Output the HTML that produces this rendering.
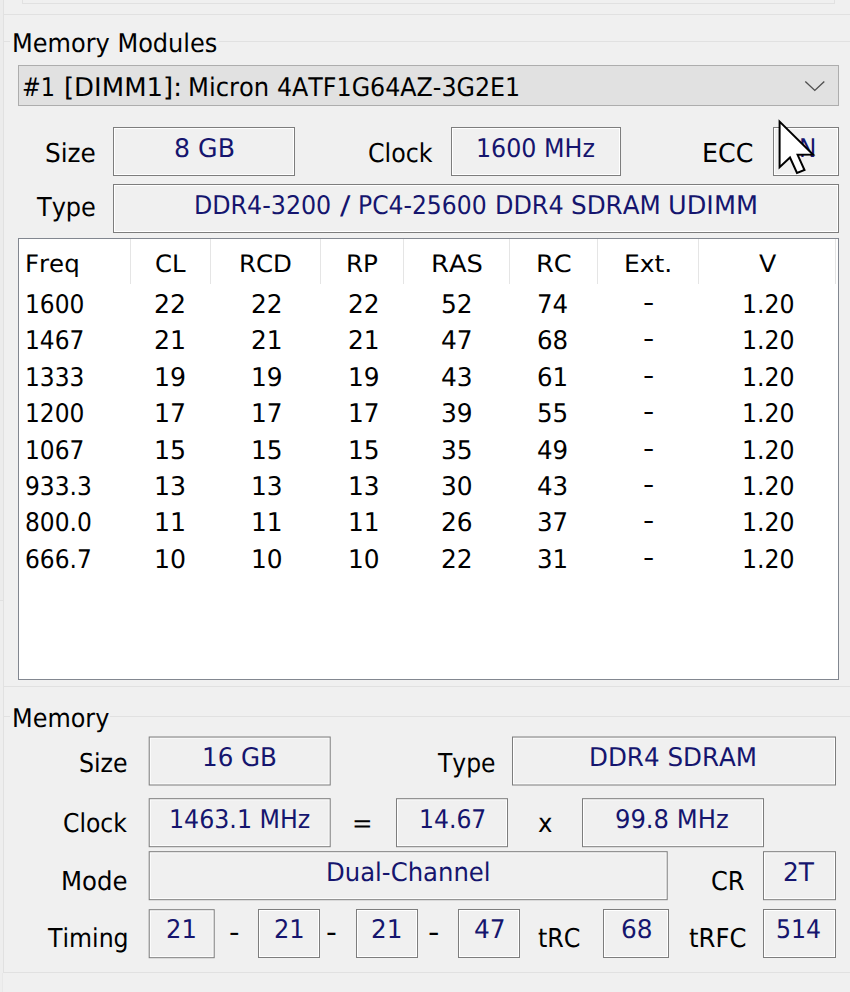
<!DOCTYPE html>
<html lang="en">
<head>
<meta charset="utf-8">
<title>Memory</title>
<style>
html,body{margin:0;padding:0}
body{width:850px;height:992px;overflow:hidden;background:#f0f0f0;position:relative;font-family:"DejaVu Sans Condensed", "DejaVu Sans", "Liberation Sans", sans-serif;font-size:25.2px;color:#000}
.t{position:absolute;white-space:nowrap;line-height:1;transform-origin:0 0;font-kerning:none;font-variant-ligatures:none;text-rendering:geometricPrecision}
.k{color:#000}
.n{color:#15156e}
.f{position:absolute;box-sizing:border-box;border:1px solid #7d7d7d;background:#f0f0f0;box-shadow:inset 0 0 0 1px #fff}
.ln{position:absolute;background:#e1e1e1}
.combo{position:absolute;box-sizing:border-box;left:18px;top:65px;width:821px;height:41px;background:#e1e1e1;border:1px solid #adadad}
.list{position:absolute;box-sizing:border-box;left:18px;top:238px;width:821px;height:442px;background:#fff;border:1px solid #828790}
.hd{position:absolute;top:239px;width:1px;height:45px;background:#e5e5e5}

</style>
</head>
<body>
<div class="ln" style="left:22px;top:0;width:1px;height:3px"></div>
<div class="ln" style="left:22px;top:3px;width:813px;height:1px"></div>
<div class="ln" style="left:834px;top:0;width:1px;height:3px"></div>
<div style="position:absolute;left:0;top:0;width:3px;height:600px;background:#ececec"></div>
<div style="position:absolute;left:0;top:601px;width:3px;height:391px;background:#eeeeee"></div>
<div class="ln" style="left:0;top:600px;width:3px;height:1px"></div>
<div class="ln" style="left:3px;top:0;width:1px;height:973px"></div>
<div style="position:absolute;left:2px;top:973px;width:1px;height:19px;background:#e8e8e8"></div>
<div class="ln" style="left:3px;top:14px;width:847px;height:1px"></div>
<div class="ln" style="left:3px;top:41px;width:1px;height:646px"></div>
<div class="ln" style="left:3px;top:41px;width:7px;height:1px"></div>
<div class="ln" style="left:219px;top:41px;width:631px;height:1px"></div>
<div class="ln" style="left:3px;top:686px;width:847px;height:1px"></div>
<div class="ln" style="left:3px;top:716px;width:1px;height:257px"></div>
<div class="ln" style="left:3px;top:716px;width:7px;height:1px"></div>
<div class="ln" style="left:110px;top:716px;width:740px;height:1px"></div>
<div class="ln" style="left:3px;top:972px;width:847px;height:1px"></div>
<div class="combo"></div>
<svg style="position:absolute;left:803px;top:77px" width="26" height="18" viewBox="0 0 26 18"><path d="M2.3 4.5 L11.8 13.4 L21.3 4.5" fill="none" stroke="#505050" stroke-width="1.4"/></svg>
<div class="list"></div>
<div class="hd" style="left:130px"></div>
<div class="hd" style="left:210px"></div>
<div class="hd" style="left:320px"></div>
<div class="hd" style="left:403px"></div>
<div class="hd" style="left:509px"></div>
<div class="hd" style="left:597px"></div>
<div class="hd" style="left:698px"></div>
<div class="hd" style="left:835px"></div>
<div class="f" style="left:113px;top:127px;width:182px;height:49px"></div>
<div class="f" style="left:451px;top:127px;width:170px;height:49px"></div>
<div class="f" style="left:773px;top:127px;width:66px;height:49px"></div>
<div class="f" style="left:113px;top:184px;width:726px;height:49px"></div>
<div class="f" style="left:148px;top:736px;width:182px;height:49px;transform:translate(0.7px,0.5px)"></div>
<div class="f" style="left:512px;top:736px;width:324px;height:49px;transform:translate(0px,0.5px)"></div>
<div class="f" style="left:148px;top:798px;width:182px;height:49px;transform:translate(0.7px,0.2px)"></div>
<div class="f" style="left:396px;top:798px;width:112px;height:49px;transform:translate(0px,0.2px)"></div>
<div class="f" style="left:582px;top:798px;width:182px;height:49px;transform:translate(0px,0.2px)"></div>
<div class="f" style="left:148px;top:851px;width:519px;height:49px;transform:translate(0.7px,0.2px)"></div>
<div class="f" style="left:763px;top:851px;width:73px;height:49px;transform:translate(0px,0.2px)"></div>
<div class="f" style="left:148px;top:909px;width:66px;height:49px;transform:translate(0.7px,0.2px)"></div>
<div class="f" style="left:258px;top:909px;width:62px;height:49px"></div>
<div class="f" style="left:356px;top:909px;width:62px;height:49px"></div>
<div class="f" style="left:458px;top:909px;width:62px;height:49px"></div>
<div class="f" style="left:603px;top:909px;width:66px;height:49px"></div>
<div class="f" style="left:763px;top:909px;width:73px;height:49px"></div>
<span id="gm" class="t k" style="left:11.86px;top:32px;font-size:25.7px;transform:scaleX(1.0401)">Memory Modules</span>
<span id="cb0" class="t k" style="left:22.48px;top:76px;font-size:25.7px;transform:scaleX(0.9684)">#1 </span>
<span id="cb1" class="t k" style="left:64.34px;top:76px;font-size:25.7px;transform:scaleX(1.1224)">[DIMM1]: </span>
<span id="cb2" class="t k" style="left:188.27px;top:76px;font-size:25.7px;transform:scaleX(1.0491)">Micron </span>
<span id="cb3" class="t k" style="left:276.82px;top:76px;font-size:25.7px;transform:scaleX(1.0281)">4ATF1G64AZ-3G2E1</span>
<span id="lsize" class="t k" style="left:45.38px;top:141px;font-size:26px;transform:scaleX(1.0591)">Size</span>
<span id="vsize" class="t n" style="left:173.60px;top:137px;font-size:25.7px;transform:scaleX(1.0921)">8 GB</span>
<span id="lclock" class="t k" style="left:368.04px;top:141px;font-size:26px;transform:scaleX(1.0166)">Clock</span>
<span id="vclock" class="t n" style="left:476.16px;top:137px;font-size:25.7px;transform:scaleX(1.0288)">1600 MHz</span>
<span id="lecc" class="t k" style="left:702.29px;top:141px;font-size:26px;transform:scaleX(1.0821)">ECC</span>
<span id="vecc" class="t n" style="left:798.50px;top:137px;font-size:25.7px;transform:scaleX(1.0005)">N</span>
<span id="ltype" class="t k" style="left:37.40px;top:195px;font-size:26px;transform:scaleX(1.0261)">Type</span>
<span id="vt0" class="t n" style="left:193.77px;top:194px;font-size:25.7px;transform:scaleX(1.0279)">DDR4-3200 </span>
<span id="vt1" class="t n" style="left:340.00px;top:194px;font-size:25.7px;transform:scaleX(1.3384)">/ </span>
<span id="vt2" class="t n" style="left:358.32px;top:194px;font-size:25.7px;transform:scaleX(1.0154)">PC4-25600 </span>
<span id="vt3" class="t n" style="left:495.07px;top:194px;font-size:25.7px;transform:scaleX(1.0351)">DDR4 </span>
<span id="vt4" class="t n" style="left:571.13px;top:194px;font-size:25.7px;transform:scaleX(1.0661)">SDRAM </span>
<span id="vt5" class="t n" style="left:667.50px;top:194px;font-size:25.7px;transform:scaleX(1.1047)">UDIMM</span>
<span id="h0" class="t k" style="left:25.00px;top:252px;font-size:24px;transform:scaleX(1.1322)">Freq</span>
<span id="h1" class="t k" style="left:154.89px;top:252px;font-size:24px;transform:scaleX(1.1272)">CL</span>
<span id="h2" class="t k" style="left:238.74px;top:252px;font-size:24px;transform:scaleX(1.1334)">RCD</span>
<span id="h3" class="t k" style="left:345.89px;top:252px;font-size:24px;transform:scaleX(1.1411)">RP</span>
<span id="h4" class="t k" style="left:430.99px;top:252px;font-size:24px;transform:scaleX(1.1921)">RAS</span>
<span id="h5" class="t k" style="left:535.99px;top:252px;font-size:24px;transform:scaleX(1.1864)">RC</span>
<span id="h6" class="t k" style="left:623.76px;top:252px;font-size:24px;transform:scaleX(1.1549)">Ext.</span>
<span id="h7" class="t k" style="left:759.28px;top:252px;font-size:24px;transform:scaleX(1.1679)">V</span>
<span id="r0c0" class="t k" style="left:24.99px;top:293px;font-size:25.7px;transform:scaleX(1.0101)">1600</span>
<span id="r0c1" class="t k" style="left:154.32px;top:293px;font-size:25.7px;transform:scaleX(1.0907)">22</span>
<span id="r0c2" class="t k" style="left:250.58px;top:293px;font-size:25.7px;transform:scaleX(1.0744)">22</span>
<span id="r0c3" class="t k" style="left:347.79px;top:293px;font-size:25.7px;transform:scaleX(1.0745)">22</span>
<span id="r0c4" class="t k" style="left:441.05px;top:293px;font-size:25.7px;transform:scaleX(1.0761)">52</span>
<span id="r0c5" class="t k" style="left:537.12px;top:293px;font-size:25.7px;transform:scaleX(1.0602)">74</span>
<span id="r0c6" class="t k" style="left:643.19px;top:291px;font-size:25.7px;transform:scaleX(1.35)">-</span>
<span id="r0c7" class="t k" style="left:742.43px;top:293px;font-size:25.7px;transform:scaleX(1.0225)">1.20</span>
<span id="r1c0" class="t k" style="left:24.99px;top:329px;font-size:25.7px;transform:scaleX(1.0101)">1467</span>
<span id="r1c1" class="t k" style="left:154.32px;top:329px;font-size:25.7px;transform:scaleX(1.0907)">21</span>
<span id="r1c2" class="t k" style="left:250.58px;top:329px;font-size:25.7px;transform:scaleX(1.0744)">21</span>
<span id="r1c3" class="t k" style="left:347.79px;top:329px;font-size:25.7px;transform:scaleX(1.0745)">21</span>
<span id="r1c4" class="t k" style="left:441.05px;top:329px;font-size:25.7px;transform:scaleX(1.0761)">47</span>
<span id="r1c5" class="t k" style="left:537.12px;top:329px;font-size:25.7px;transform:scaleX(1.0602)">68</span>
<span id="r1c6" class="t k" style="left:643.19px;top:327px;font-size:25.7px;transform:scaleX(1.35)">-</span>
<span id="r1c7" class="t k" style="left:742.43px;top:329px;font-size:25.7px;transform:scaleX(1.0225)">1.20</span>
<span id="r2c0" class="t k" style="left:24.99px;top:366px;font-size:25.7px;transform:scaleX(1.0101)">1333</span>
<span id="r2c1" class="t k" style="left:154.32px;top:366px;font-size:25.7px;transform:scaleX(1.0907)">19</span>
<span id="r2c2" class="t k" style="left:250.58px;top:366px;font-size:25.7px;transform:scaleX(1.0744)">19</span>
<span id="r2c3" class="t k" style="left:347.79px;top:366px;font-size:25.7px;transform:scaleX(1.0745)">19</span>
<span id="r2c4" class="t k" style="left:441.05px;top:366px;font-size:25.7px;transform:scaleX(1.0761)">43</span>
<span id="r2c5" class="t k" style="left:537.12px;top:366px;font-size:25.7px;transform:scaleX(1.0602)">61</span>
<span id="r2c6" class="t k" style="left:643.19px;top:364px;font-size:25.7px;transform:scaleX(1.35)">-</span>
<span id="r2c7" class="t k" style="left:742.43px;top:366px;font-size:25.7px;transform:scaleX(1.0225)">1.20</span>
<span id="r3c0" class="t k" style="left:24.99px;top:402px;font-size:25.7px;transform:scaleX(1.0101)">1200</span>
<span id="r3c1" class="t k" style="left:154.32px;top:402px;font-size:25.7px;transform:scaleX(1.0907)">17</span>
<span id="r3c2" class="t k" style="left:250.58px;top:402px;font-size:25.7px;transform:scaleX(1.0744)">17</span>
<span id="r3c3" class="t k" style="left:347.79px;top:402px;font-size:25.7px;transform:scaleX(1.0745)">17</span>
<span id="r3c4" class="t k" style="left:441.05px;top:402px;font-size:25.7px;transform:scaleX(1.0761)">39</span>
<span id="r3c5" class="t k" style="left:537.12px;top:402px;font-size:25.7px;transform:scaleX(1.0602)">55</span>
<span id="r3c6" class="t k" style="left:643.19px;top:400px;font-size:25.7px;transform:scaleX(1.35)">-</span>
<span id="r3c7" class="t k" style="left:742.43px;top:402px;font-size:25.7px;transform:scaleX(1.0225)">1.20</span>
<span id="r4c0" class="t k" style="left:24.99px;top:439px;font-size:25.7px;transform:scaleX(1.0101)">1067</span>
<span id="r4c1" class="t k" style="left:154.32px;top:439px;font-size:25.7px;transform:scaleX(1.0907)">15</span>
<span id="r4c2" class="t k" style="left:250.58px;top:439px;font-size:25.7px;transform:scaleX(1.0744)">15</span>
<span id="r4c3" class="t k" style="left:347.79px;top:439px;font-size:25.7px;transform:scaleX(1.0745)">15</span>
<span id="r4c4" class="t k" style="left:441.05px;top:439px;font-size:25.7px;transform:scaleX(1.0761)">35</span>
<span id="r4c5" class="t k" style="left:537.12px;top:439px;font-size:25.7px;transform:scaleX(1.0602)">49</span>
<span id="r4c6" class="t k" style="left:643.19px;top:437px;font-size:25.7px;transform:scaleX(1.35)">-</span>
<span id="r4c7" class="t k" style="left:742.43px;top:439px;font-size:25.7px;transform:scaleX(1.0225)">1.20</span>
<span id="r5c0" class="t k" style="left:24.99px;top:475px;font-size:25.7px;transform:scaleX(1.0101)">933.3</span>
<span id="r5c1" class="t k" style="left:154.32px;top:475px;font-size:25.7px;transform:scaleX(1.0907)">13</span>
<span id="r5c2" class="t k" style="left:250.58px;top:475px;font-size:25.7px;transform:scaleX(1.0744)">13</span>
<span id="r5c3" class="t k" style="left:347.79px;top:475px;font-size:25.7px;transform:scaleX(1.0745)">13</span>
<span id="r5c4" class="t k" style="left:441.05px;top:475px;font-size:25.7px;transform:scaleX(1.0761)">30</span>
<span id="r5c5" class="t k" style="left:537.12px;top:475px;font-size:25.7px;transform:scaleX(1.0602)">43</span>
<span id="r5c6" class="t k" style="left:643.19px;top:473px;font-size:25.7px;transform:scaleX(1.35)">-</span>
<span id="r5c7" class="t k" style="left:742.43px;top:475px;font-size:25.7px;transform:scaleX(1.0225)">1.20</span>
<span id="r6c0" class="t k" style="left:24.99px;top:511px;font-size:25.7px;transform:scaleX(1.0101)">800.0</span>
<span id="r6c1" class="t k" style="left:154.32px;top:511px;font-size:25.7px;transform:scaleX(1.0907)">11</span>
<span id="r6c2" class="t k" style="left:250.58px;top:511px;font-size:25.7px;transform:scaleX(1.0744)">11</span>
<span id="r6c3" class="t k" style="left:347.79px;top:511px;font-size:25.7px;transform:scaleX(1.0745)">11</span>
<span id="r6c4" class="t k" style="left:441.05px;top:511px;font-size:25.7px;transform:scaleX(1.0761)">26</span>
<span id="r6c5" class="t k" style="left:537.12px;top:511px;font-size:25.7px;transform:scaleX(1.0602)">37</span>
<span id="r6c6" class="t k" style="left:643.19px;top:509px;font-size:25.7px;transform:scaleX(1.35)">-</span>
<span id="r6c7" class="t k" style="left:742.43px;top:511px;font-size:25.7px;transform:scaleX(1.0225)">1.20</span>
<span id="r7c0" class="t k" style="left:24.99px;top:548px;font-size:25.7px;transform:scaleX(1.0101)">666.7</span>
<span id="r7c1" class="t k" style="left:154.32px;top:548px;font-size:25.7px;transform:scaleX(1.0907)">10</span>
<span id="r7c2" class="t k" style="left:250.58px;top:548px;font-size:25.7px;transform:scaleX(1.0744)">10</span>
<span id="r7c3" class="t k" style="left:347.79px;top:548px;font-size:25.7px;transform:scaleX(1.0745)">10</span>
<span id="r7c4" class="t k" style="left:441.05px;top:548px;font-size:25.7px;transform:scaleX(1.0761)">22</span>
<span id="r7c5" class="t k" style="left:537.12px;top:548px;font-size:25.7px;transform:scaleX(1.0602)">31</span>
<span id="r7c6" class="t k" style="left:643.19px;top:546px;font-size:25.7px;transform:scaleX(1.35)">-</span>
<span id="r7c7" class="t k" style="left:742.43px;top:548px;font-size:25.7px;transform:scaleX(1.0225)">1.20</span>
<span id="gmem" class="t k" style="left:11.85px;top:707px;font-size:25.7px;transform:scaleX(1.0356)">Memory</span>
<span id="msize" class="t k" style="left:79.09px;top:751px;font-size:26px;transform:scaleX(1.0119)">Size</span>
<span id="mvsize" class="t n" style="left:202.34px;top:746px;font-size:25.7px;transform:scaleX(1.063)">16 GB</span>
<span id="mtype" class="t k" style="left:438.16px;top:751px;font-size:26px;transform:scaleX(1.0015)">Type</span>
<span id="mvtype" class="t n" style="left:589.45px;top:746px;font-size:25.7px;transform:scaleX(1.0638)">DDR4 SDRAM</span>
<span id="mclock" class="t k" style="left:63.30px;top:811px;font-size:26px;transform:scaleX(1.0059)">Clock</span>
<span id="mvclock" class="t n" style="left:168.69px;top:808px;font-size:25.7px;transform:scaleX(1.0267)">1463.1 MHz</span>
<span id="meq" class="t k" style="left:352.22px;top:811px;font-size:26px;transform:scaleX(1.052)">=</span>
<span id="mvmult" class="t n" style="left:418.62px;top:808px;font-size:25.7px;transform:scaleX(1.0182)">14.67</span>
<span id="mx" class="t k" style="left:538.17px;top:811px;font-size:26px;transform:scaleX(1.0422)">x</span>
<span id="mvbclk" class="t n" style="left:615.35px;top:808px;font-size:25.7px;transform:scaleX(1.0497)">99.8 MHz</span>
<span id="mmode" class="t k" style="left:61.23px;top:869px;font-size:26px;transform:scaleX(1.0434)">Mode</span>
<span id="mvmode" class="t n" style="left:325.53px;top:861px;font-size:25.7px;transform:scaleX(1.0532)">Dual-Channel</span>
<span id="mcr" class="t k" style="left:710.91px;top:869px;font-size:26px;transform:scaleX(1.029)">CR</span>
<span id="mvcr" class="t n" style="left:783.28px;top:861px;font-size:25.7px;transform:scaleX(1.0739)">2T</span>
<span id="mtiming" class="t k" style="left:47.65px;top:926px;font-size:26px;transform:scaleX(1.0111)">Timing</span>
<span id="t1" class="t n" style="left:166.26px;top:918px;font-size:25.7px;transform:scaleX(1.0464)">21</span>
<span id="d1" class="t k" style="left:229.12px;top:920px;font-size:26px;transform:scaleX(1.2485)">-</span>
<span id="t2" class="t n" style="left:274.09px;top:918px;font-size:25.7px;transform:scaleX(1.0441)">21</span>
<span id="d2" class="t k" style="left:326.28px;top:920px;font-size:26px;transform:scaleX(1.2848)">-</span>
<span id="t3" class="t n" style="left:371.23px;top:918px;font-size:25.7px;transform:scaleX(1.0665)">21</span>
<span id="d3" class="t k" style="left:428.26px;top:920px;font-size:26px;transform:scaleX(1.35)">-</span>
<span id="t4" class="t n" style="left:473.89px;top:918px;font-size:25.7px;transform:scaleX(1.0754)">47</span>
<span id="ltrc" class="t k" style="left:538.29px;top:926px;font-size:26px;transform:scaleX(1.0175)">tRC</span>
<span id="vtrc" class="t n" style="left:620.86px;top:918px;font-size:25.7px;transform:scaleX(1.0736)">68</span>
<span id="ltrfc" class="t k" style="left:689.23px;top:926px;font-size:26px;transform:scaleX(1.0388)">tRFC</span>
<span id="vtrfc" class="t n" style="left:776.47px;top:918px;font-size:25.7px;transform:scaleX(1.0228)">514</span>
<svg style="position:absolute;left:770px;top:112px" width="60" height="70" viewBox="770 112 60 70"><path d="M779.6 121.6 L779.6 167.2 L790 157.5 L797 173 L804.5 170 L797.6 154.8 L813 154.5 Z" fill="#fff" stroke="#000" stroke-width="2" stroke-linejoin="miter"/></svg>
</body>
</html>
